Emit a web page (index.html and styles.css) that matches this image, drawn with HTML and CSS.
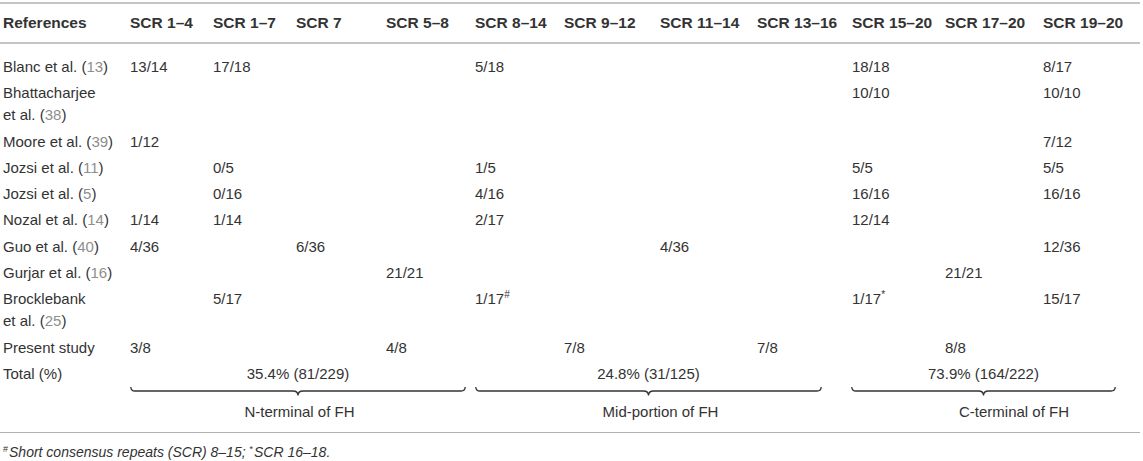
FILE: index.html
```html
<!DOCTYPE html>
<html lang="en">
<head>
  <meta charset="UTF-8">
  <title>SCR variants table</title>
  <link rel="stylesheet" href="styles.css">
</head>
<body>

  <table class="tabela">
    <colgroup>
      <col class="c-ref">
      <col class="c-1"><col class="c-2"><col class="c-3"><col class="c-4">
      <col class="c-5"><col class="c-6"><col class="c-7"><col class="c-8">
      <col class="c-9"><col class="c-10"><col class="c-11">
    </colgroup>
    <thead>
      <tr>
        <th>References</th>
        <th>SCR 1–4</th>
        <th>SCR 1–7</th>
        <th>SCR 7</th>
        <th>SCR 5–8</th>
        <th>SCR 8–14</th>
        <th>SCR 9–12</th>
        <th>SCR 11–14</th>
        <th>SCR 13–16</th>
        <th>SCR 15–20</th>
        <th>SCR 17–20</th>
        <th>SCR 19–20</th>
      </tr>
    </thead>
    <tbody>
      <tr class="primeira">
        <td>Blanc et al. (<span class="cit">13</span>)</td>
        <td>13/14</td><td>17/18</td><td></td><td></td>
        <td>5/18</td><td></td><td></td><td></td>
        <td>18/18</td><td></td><td>8/17</td>
      </tr>
      <tr>
        <td>Bhattacharjee<br>et al. (<span class="cit">38</span>)</td>
        <td></td><td></td><td></td><td></td>
        <td></td><td></td><td></td><td></td>
        <td>10/10</td><td></td><td>10/10</td>
      </tr>
      <tr>
        <td>Moore et al. (<span class="cit">39</span>)</td>
        <td>1/12</td><td></td><td></td><td></td>
        <td></td><td></td><td></td><td></td>
        <td></td><td></td><td>7/12</td>
      </tr>
      <tr>
        <td>Jozsi et al. (<span class="cit">11</span>)</td>
        <td></td><td>0/5</td><td></td><td></td>
        <td>1/5</td><td></td><td></td><td></td>
        <td>5/5</td><td></td><td>5/5</td>
      </tr>
      <tr>
        <td>Jozsi et al. (<span class="cit">5</span>)</td>
        <td></td><td>0/16</td><td></td><td></td>
        <td>4/16</td><td></td><td></td><td></td>
        <td>16/16</td><td></td><td>16/16</td>
      </tr>
      <tr>
        <td>Nozal et al. (<span class="cit">14</span>)</td>
        <td>1/14</td><td>1/14</td><td></td><td></td>
        <td>2/17</td><td></td><td></td><td></td>
        <td>12/14</td><td></td><td></td>
      </tr>
      <tr>
        <td>Guo et al. (<span class="cit">40</span>)</td>
        <td>4/36</td><td></td><td>6/36</td><td></td>
        <td></td><td></td><td>4/36</td><td></td>
        <td></td><td></td><td>12/36</td>
      </tr>
      <tr>
        <td>Gurjar et al. (<span class="cit">16</span>)</td>
        <td></td><td></td><td></td><td>21/21</td>
        <td></td><td></td><td></td><td></td>
        <td></td><td>21/21</td><td></td>
      </tr>
      <tr>
        <td>Brocklebank<br>et al. (<span class="cit">25</span>)</td>
        <td></td><td>5/17</td><td></td><td></td>
        <td>1/17<sup class="marca">#</sup></td><td></td><td></td><td></td>
        <td>1/17<sup class="estrela">*</sup></td><td></td><td>15/17</td>
      </tr>
      <tr>
        <td>Present study</td>
        <td>3/8</td><td></td><td></td><td>4/8</td>
        <td></td><td>7/8</td><td></td><td>7/8</td>
        <td></td><td>8/8</td><td></td>
      </tr>
      <tr class="linha-total">
        <td>Total (%)</td>
        <td colspan="4"><div class="grupo grupo-n">35.4% (81/229)</div></td>
        <td colspan="4"><div class="grupo grupo-m">24.8% (31/125)</div></td>
        <td colspan="3" class="cel-c"><div class="grupo grupo-c">73.9% (164/222)</div></td>
      </tr>
      <tr class="linha-chave">
        <td></td>
        <td colspan="4">
          <svg class="chave" width="336" height="10" viewBox="0 0 336 10">
            <path d="M0.8 0 Q0.8 4 5 4 H163 Q168 4 168 8.5 Q168 4 173 4 H331 Q335.2 4 335.2 0"/>
          </svg>
        </td>
        <td colspan="4">
          <svg class="chave" width="347" height="10" viewBox="0 0 347 10">
            <path d="M0.8 0 Q0.8 4 5 4 H168.5 Q173.5 4 173.5 8.5 Q173.5 4 178.5 4 H342 Q346.2 4 346.2 0"/>
          </svg>
        </td>
        <td colspan="3" class="cel-c">
          <svg class="chave" width="265" height="10" viewBox="0 0 265 10">
            <path d="M0.8 0 Q0.8 4 5 4 H127.5 Q132.5 4 132.5 8.5 Q132.5 4 137.5 4 H260 Q264.2 4 264.2 0"/>
          </svg>
        </td>
      </tr>
      <tr class="linha-regiao">
        <td></td>
        <td colspan="4">N-terminal of FH</td>
        <td colspan="4">Mid-portion of FH</td>
        <td colspan="3" class="regiao-c">C-terminal of FH</td>
      </tr>
    </tbody>
  </table>

  <p class="nota"><sup>#</sup>Short consensus repeats (SCR) 8–15; <sup>*</sup>SCR 16–18.</p>

</body>
</html>
```

FILE: styles.css
```css
* {
  margin: 0;
  padding: 0;
  box-sizing: border-box;
}

body {
  font-family: "Liberation Sans", Arial, sans-serif;
  font-size: 15px;
  color: #333;
  background-color: #fff;
  padding-top: 2px;
}

/* Tabela principal */
.tabela {
  width: 1140px;
  table-layout: fixed;
  border-collapse: collapse;
  border-top: 2px solid #c4c4c4;
  border-bottom: 1px solid #b0b0b0;
}

.c-ref { width: 127px; }
.c-1 { width: 83px; }
.c-2 { width: 83px; }
.c-3 { width: 90px; }
.c-4 { width: 89px; }
.c-5 { width: 89px; }
.c-6 { width: 96px; }
.c-7 { width: 97px; }
.c-8 { width: 95px; }
.c-9 { width: 93px; }
.c-10 { width: 98px; }
.c-11 { width: 100px; }

.tabela th {
  text-align: left;
  font-weight: bold;
  font-size: 15.5px;
  line-height: 22px;
  padding: 8px 3px 8px;
  border-bottom: 2px solid #c4c4c4;
  white-space: nowrap;
}

.tabela td {
  text-align: left;
  vertical-align: top;
  line-height: 22px;
  padding: 2.15px 3px;
  white-space: nowrap;
}

.tabela .primeira td {
  padding-top: 12px;
}

.cit {
  color: #8e8e8e;
}

.tabela sup {
  font-size: 10px;
  line-height: 0;
  vertical-align: 6px;
}

/* Linhas de total e chaves */
.linha-total td {
  padding-bottom: 2px;
}

.grupo {
  text-align: center;
}

.grupo-n { width: 336px; }
.grupo-m { width: 347px; }
.grupo-c { width: 265px; }

.tabela .cel-c {
  padding-left: 2px;
}

.linha-chave td {
  padding: 0 3px;
  line-height: 0;
}

.linha-chave .cel-c {
  padding-left: 2px;
}

.chave {
  display: block;
}

.chave path {
  fill: none;
  stroke: #333;
  stroke-width: 1.3;
}

.linha-regiao td {
  text-align: center;
  padding: 4px 3px 9px;
}

.tabela .regiao-c {
  padding-left: 42px;
}

/* Nota de rodape */
.nota {
  font-style: italic;
  font-size: 14px;
  line-height: 20px;
  margin-top: 9px;
  padding-left: 3px;
}

.nota sup {
  font-style: normal;
  font-size: 9px;
  line-height: 0;
  vertical-align: 5px;
  margin-right: 1px;
}
```
